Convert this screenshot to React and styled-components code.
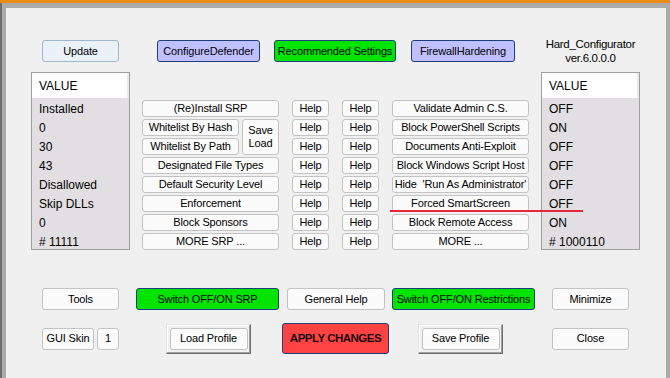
import styled, { createGlobalStyle } from 'styled-components'

const GlobalStyle = createGlobalStyle`
  html, body {
    margin: 0;
    padding: 0;
    background: #f0f0f0;
  }
  body {
    font-family: "Liberation Sans", Arial, sans-serif;
    font-size: 11px;
    letter-spacing: -0.15px;
    color: #000;
  }
`

const Window = styled.div`
  width: 670px;
  height: 378px;
  box-sizing: border-box;
  overflow: hidden;
  background: #ababab;
  border-top: 3px solid #e98c14;
  padding: 5px 4px 0 6px;
  box-shadow: inset 2px 0 #6e6e6e;
`

const Content = styled.div`
  position: relative;
  height: 100%;
  background: #f0f0f0;
  padding: 32px 0 0 25px;
  box-sizing: border-box;
`

const Row = styled.div`
  display: flex;
  align-items: center;
  height: ${p => p.$h || 22}px;
  margin-top: ${p => p.$mt || 0}px;
`

const variants = {
  plain: { bg: '#fbfbfb', border: '#c3c3c3' },
  blue: { bg: '#eaf1f8', border: '#9fb6cf' },
  lavender: { bg: '#c0c0ff', border: '#1f3c7c' },
  green: { bg: '#00e400', border: '#1f3c7c' },
  red: { bg: '#ff4242', border: '#1f3c7c' },
}

const Btn = styled.div`
  box-sizing: border-box;
  width: ${p => (p.$w ? `${p.$w}px` : 'auto')};
  height: ${p => p.$h || 22}px;
  margin-left: ${p => p.$ml || 0}px;
  display: flex;
  align-items: center;
  justify-content: center;
  text-align: center;
  white-space: pre;
  background: ${p => variants[p.$v || 'plain'].bg};
  border: 1px solid ${p => variants[p.$v || 'plain'].border};
  border-radius: 3px;
  line-height: 13px;
`

const ApplyBtn = styled(Btn)`
  font-weight: 700;
  font-size: 11.5px;
  letter-spacing: -0.5px;
  color: #1a0a10;
`

const Raised = styled.div`
  box-sizing: border-box;
  width: 85px;
  height: 30px;
  margin-left: ${p => p.$ml}px;
  padding: 2px;
  border: 1px solid;
  border-color: #e4e4e4 #6c6c6c #6c6c6c #e4e4e4;
  box-shadow: inset -1px -1px #a0a0a0, inset 1px 1px #fff;
  display: flex;
  align-items: center;
  justify-content: center;
`

const Title = styled.div`
  width: 99px;
  margin-left: 26px;
  text-align: center;
  line-height: 14px;
  font-size: 11.5px;
  letter-spacing: -0.3px;
`

const Middle = styled.div`
  position: relative;
  display: flex;
  align-items: flex-start;
  margin-top: 10px;
`

const Panel = styled.div`
  box-sizing: border-box;
  width: 99px;
  height: 178px;
  border: 1px solid #a0a0a0;
  background: #e1dfe1;
  margin-right: ${p => p.$mr || 0}px;
  margin-left: ${p => p.$ml || 0}px;
  font-size: 12px;
  letter-spacing: 0;
`

const PanelHead = styled.div`
  height: 25px;
  line-height: 27px;
  padding-left: 7px;
  background: #fff;
  border-right: 2px solid #e9e9e9;
  overflow: hidden;
`

const PanelRow = styled.div`
  box-sizing: border-box;
  height: 19px;
  padding-top: 3px;
  line-height: 16px;
  padding-left: 7px;
`

const Grid = styled.div`
  display: grid;
  grid-template-columns: 97px 3px 37px 13px 37px 13px 37px 13px 137px;
  grid-auto-rows: 17px;
  row-gap: 2px;
  padding-top: 28px;
`

const Cell = styled(Btn)`
  grid-column: ${p => p.$col};
  grid-row: ${p => p.$row};
  height: auto;
`

const Strike = styled.div`
  position: absolute;
  left: 359px;
  top: 138px;
  width: 193px;
  height: 2px;
  background: #e5283a;
`

const leftValues = ['Installed', '0', '30', '43', 'Disallowed', 'Skip DLLs', '0', '# 11111']
const rightValues = ['OFF', 'ON', 'OFF', 'OFF', 'OFF', 'OFF', 'ON', '# 1000110']

const srp = [
  { label: '(Re)Install SRP', row: 1 },
  { label: 'Designated File Types', row: 4 },
  { label: 'Default Security Level', row: 5 },
  { label: 'Enforcement', row: 6 },
  { label: 'Block Sponsors', row: 7 },
  { label: 'MORE SRP ...', row: 8 },
]

const restrictions = [
  'Validate Admin C.S.',
  'Block PowerShell Scripts',
  'Documents Anti-Exploit',
  'Block Windows Script Host',
  "Hide  'Run As Administrator'",
  'Forced SmartScreen',
  'Block Remote Access',
  'MORE ...',
]

const App = () => {
  return (
    <>
      <GlobalStyle />
      <Window>
        <Content>
          <Row>
            <Btn $v="blue" $w={77} $ml={11}>Update</Btn>
            <Btn $v="lavender" $w={103} $ml={38}>ConfigureDefender</Btn>
            <Btn $v="green" $w={122} $ml={14}>Recommended Settings</Btn>
            <Btn $v="lavender" $w={104} $ml={15}>FirewallHardening</Btn>
            <Title>
              Hard_Configurator
              <br />
              ver.6.0.0.0
            </Title>
          </Row>

          <Middle>
            <Panel $mr={12}>
              <PanelHead>VALUE</PanelHead>
              {leftValues.map((v, i) => <PanelRow key={i}>{v}</PanelRow>)}
            </Panel>

            <Grid>
              {srp.map(b => (
                <Cell key={b.label} $col="1 / 4" $row={b.row}>{b.label}</Cell>
              ))}
              <Cell $col="1" $row="2">Whitelist By Hash</Cell>
              <Cell $col="1" $row="3">Whitelist By Path</Cell>
              <Cell $col="3" $row="2 / 4">{'Save\nLoad'}</Cell>
              {restrictions.flatMap((label, i) => [
                <Cell key={`h1${i}`} $col="5" $row={i + 1}>Help</Cell>,
                <Cell key={`h2${i}`} $col="7" $row={i + 1}>Help</Cell>,
                <Cell key={label} $col="9" $row={i + 1}>{label}</Cell>,
              ])}
            </Grid>

            <Panel $ml={12}>
              <PanelHead>VALUE</PanelHead>
              {rightValues.map((v, i) => <PanelRow key={i}>{v}</PanelRow>)}
            </Panel>

            <Strike />
          </Middle>

          <Row $mt={38}>
            <Btn $w={77} $ml={11}>Tools</Btn>
            <Btn $v="green" $w={143} $ml={17}>Switch OFF/ON SRP</Btn>
            <Btn $w={98} $ml={8}>General Help</Btn>
            <Btn $v="green" $w={143} $ml={7}>Switch OFF/ON Restrictions</Btn>
            <Btn $w={77} $ml={17}>Minimize</Btn>
          </Row>

          <Row $h={31} $mt={13}>
            <Btn $w={52} $ml={11}>GUI Skin</Btn>
            <Btn $w={22} $ml={3}>1</Btn>
            <Raised $ml={47}>
              <Btn $w={78}>Load Profile</Btn>
            </Raised>
            <ApplyBtn $v="red" $w={107} $h={31} $ml={31}>APPLY CHANGES</ApplyBtn>
            <Raised $ml={29}>
              <Btn $w={78}>Save Profile</Btn>
            </Raised>
            <Btn $w={77} $ml={49}>Close</Btn>
          </Row>
        </Content>
      </Window>
    </>
  )
}

export default App
